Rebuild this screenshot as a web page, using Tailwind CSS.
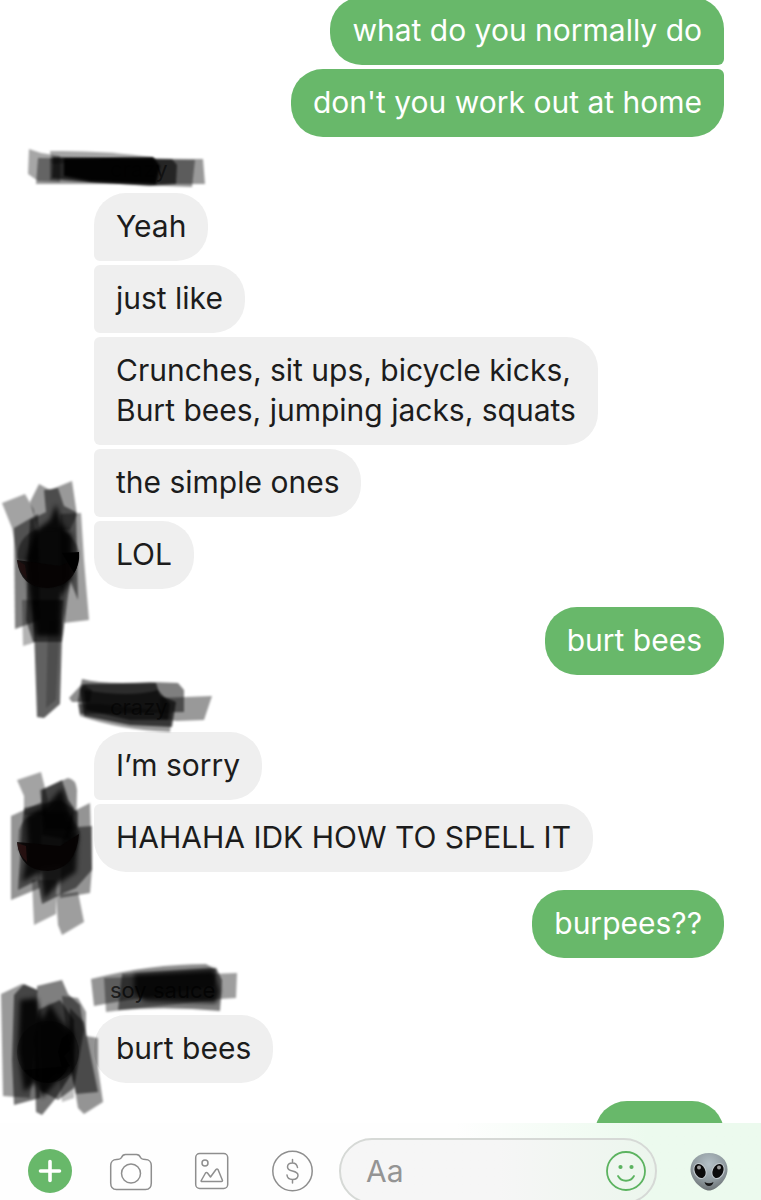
<!DOCTYPE html>
<html lang="en">
<head>
    <meta charset="UTF-8">
    <meta name="viewport" content="width=device-width, initial-scale=1.0">
    <title>Group Chat</title>
    <script src="https://cdn.jsdelivr.net/npm/@tailwindcss/browser@4"></script>
</head>
<body class="bg-white">

    <div class="h-screen flex flex-col overflow-hidden font-[Inter,'Liberation_Sans',sans-serif] text-[30px] leading-10 text-[#1c1c1c]">

        <!-- Messages -->
        <main class="flex-1 min-h-0 overflow-hidden">

            <section class="-mt-[3px] pr-[37px] flex flex-col items-end gap-1 text-white">
                <p class="bg-[#68b86a] px-[22px] pt-[13px] pb-[15px] rounded-[32px] rounded-br-md">what do you normally do</p>
                <p class="bg-[#68b86a] px-[22px] pt-[13px] pb-[15px] rounded-[32px] rounded-tr-md">don't you work out at home</p>
            </section>

            <section class="relative pl-[94px] flex flex-col items-start gap-1">
                <h2 class="h-[52px] pt-5 pl-4 text-[22px] leading-6 text-[#777]">crazy</h2>
                <p class="bg-[#efefef] px-[22px] pt-[13px] pb-[15px] rounded-[32px] rounded-bl-md">Yeah</p>
                <p class="bg-[#efefef] px-[22px] pt-[13px] pb-[15px] rounded-[32px] rounded-l-md">just like</p>
                <p class="bg-[#efefef] px-[22px] pt-[13px] pb-[15px] rounded-[32px] rounded-l-md">Crunches, sit ups, bicycle kicks,<br>Burt bees, jumping jacks, squats</p>
                <p class="bg-[#efefef] px-[22px] pt-[13px] pb-[15px] rounded-[32px] rounded-l-md">the simple ones</p>
                <p class="bg-[#efefef] px-[22px] pt-[13px] pb-[15px] rounded-[32px] rounded-tl-md">LOL</p>

                <!-- marker over name and avatar -->
                <svg class="absolute left-0 top-0 pointer-events-none" width="220" height="600" viewBox="0 137 220 600" aria-hidden="true">
                    <defs>
                        <filter id="soft" x="-10%" y="-10%" width="120%" height="120%"><feGaussianBlur stdDeviation="1.300"/></filter>
                        <filter id="softer" x="-20%" y="-20%" width="140%" height="140%"><feGaussianBlur stdDeviation="2.500"/></filter>
                    </defs>
                    <g filter="url(#soft)">
                        <path d="M29 149L41 153L60 156L60 182L38 181L28 174Z" opacity=".35"/>
                        <path d="M50 151Q100 150 152 157L52 164Z" opacity=".35"/>
                        <path d="M38 158L203 159L205 184L36 184Z" opacity=".4"/>
                        <path d="M50 158L195 160L192 187L140 185L80 182L50 180Z" opacity=".4"/>
                        <path d="M53 157L172 159L177 165L176 184L150 186L90 182L52 178Z" opacity=".6"/>
                    </g>
                    <path d="M64 159L153 157L160 166L156 184L90 181L64 176Z" opacity=".92" filter="url(#soft)"/>
                    <g filter="url(#soft)">
                        <path d="M2 503L25 494L34 510L38 560L18 560L12 528Z" opacity=".36"/>
                        <path d="M30 502L39 484L50 490L72 481L77 515L70 530L38 530Z" opacity=".4"/>
                        <path d="M14 528L38 514L40 620L15 629Z" opacity=".5"/>
                        <path d="M60 514L81 513L84 560L89 620L64 623L60 580Z" opacity=".38"/>
                        <path d="M22 600L36 600L36 642L23 646Z" opacity=".3"/>
                        <path d="M44 490L58 488L64 506L76 512L78 600L70 580L62 642L33 642L26 620L30 520L46 512Z" opacity=".5"/>
                        <path d="M33 600L63 600L60 704L44 718L37 717Z" opacity=".62"/>
                        <path d="M48 620L60 620L56 700L46 708Z" opacity=".2"/>
                    </g>
                    <path d="M34 532L50 520L56 504L62 524L72 536L72 578L62 596L60 636L36 636L30 600L26 560Z" opacity=".88" filter="url(#softer)"/>
                    <path d="M17 557Q18 538 35 530L60 529Q76 538 79 552Q80 568 66 582Q48 594 29 582Q18 572 17 557Z" fill="#060202" opacity=".45" filter="url(#soft)"/>
                    <path d="M17 560Q20 588 48 588Q76 586 79 557L60 566Z" fill="#060202" opacity=".8"/>
                    <path d="M62 553L79 552Q80 564 74 573Z" fill="#000"/>
                    <path d="M17 560Q19 572 27 579L25 565Z" fill="#281010" opacity=".6"/>
                </svg>
            </section>

            <section class="mt-[18px] pr-[37px] flex flex-col items-end text-white">
                <p class="bg-[#68b86a] px-[22px] pt-[13px] pb-[15px] rounded-[32px]">burt bees</p>
            </section>

            <section class="relative pl-[94px] flex flex-col items-start gap-1">
                <h2 class="h-[53px] pt-5 pl-4 text-[22px] leading-6 text-[#777]">crazy</h2>
                <p class="bg-[#efefef] px-[22px] pt-[13px] pb-[15px] rounded-[32px] rounded-bl-md">I’m sorry</p>
                <p class="bg-[#efefef] px-[22px] pt-[13px] pb-[15px] rounded-[32px] rounded-tl-md">HAHAHA IDK HOW TO SPELL IT</p>

                <svg class="absolute left-0 top-0 pointer-events-none" width="220" height="270" viewBox="0 675 220 270" aria-hidden="true">
                    <g filter="url(#soft)">
                        <path d="M69 698L82 684L92 690L90 702L72 702Z" opacity=".45"/>
                        <path d="M82 679Q105 685 150 682L178 683L184 690L184 712L80 714L78 700Z" opacity=".5"/>
                        <path d="M84 684L156 683L160 695L176 702L172 727L130 725L84 716L80 690Z" opacity=".65"/>
                        <path d="M84 690Q130 698 158 690L170 704L168 720L130 720L86 710Z" opacity=".6"/>
                        <path d="M160 698L212 696L204 720L176 721L160 718Z" opacity=".4"/>
                        <path d="M78 704L100 704L172 712L170 732Q120 730 80 716Z" opacity=".4"/>
                    </g>
                    <g filter="url(#soft)">
                        <path d="M17 780L41 772L48 800L46 815L24 815L24 796Z" opacity=".36"/>
                        <path d="M40 790L68 778Q76 779 77 790L76 830L44 830Z" opacity=".42"/>
                        <path d="M42 790L62 780L68 800L74 808L70 840L42 835Z" opacity=".55"/>
                        <path d="M11 816L42 802L40 888L11 900Z" opacity=".42"/>
                        <path d="M72 812L90 803L92 868L90 893L60 898L62 840Z" opacity=".42"/>
                        <path d="M24 808L60 800L78 812L78 827L92 826L92 870L76 888L64 893L42 904L38 880L18 890L22 830Z" opacity=".5"/>
                        <path d="M32 880L56 880L56 914L34 925Z" opacity=".35"/>
                        <path d="M56 895L78 892L84 922L62 935L58 925Z" opacity=".38"/>
                    </g>
                    <path d="M26 816L46 806L62 788L70 814L78 836L76 872L58 884L44 900L40 872L22 882L28 846Z" opacity=".82" filter="url(#softer)"/>
                    <path d="M19 830Q24 816 40 812L68 812L80 832Q80 850 68 864L36 868L18 850Z" fill="#060202" opacity=".4" filter="url(#soft)"/>
                    <path d="M17 842Q20 871 48 871Q76 869 79 834L60 846Z" fill="#060202" opacity=".85"/>
                    <path d="M17 843Q19 855 27 862L26 846Z" fill="#301414" opacity=".7"/>
                </svg>
            </section>

            <section class="mt-[18px] pr-[37px] flex flex-col items-end text-white">
                <p class="bg-[#68b86a] px-[22px] pt-[13px] pb-[15px] rounded-[32px]">burpees??</p>
            </section>

            <section class="relative pl-[94px] flex flex-col items-start gap-1">
                <h2 class="h-[53px] pt-5 pl-4 text-[22px] leading-6 text-[#555]">soy sauce</h2>
                <p class="bg-[#efefef] px-[22px] pt-[13px] pb-[15px] rounded-[32px]">burt bees</p>

                <svg class="absolute left-0 top-0 pointer-events-none" width="250" height="170" viewBox="0 958 250 170" aria-hidden="true">
                    <g filter="url(#soft)">
                        <path d="M91 979Q150 964 206 964L216 970L214 986L110 1003L94 1006Z" opacity=".42"/>
                        <path d="M104 978L210 974L237 973L236 998L220 999L140 1008L106 1012Z" opacity=".38"/>
                        <path d="M122 974L216 968L222 980L220 1011Q170 1006 118 1010Z" opacity=".5"/>
                    </g>
                    <path d="M134 974L214 969L220 992L216 1003L145 1001L134 992Z" opacity=".82" filter="url(#softer)"/>
                    <g filter="url(#soft)">
                        <path d="M1 994L22 984L38 990L30 1098L3 1096Z" opacity=".4"/>
                        <path d="M14 995L24 984L37 990L40 1098L14 1105L12 1060Z" opacity=".55"/>
                        <path d="M37 986L62 980L68 994L80 1005L84 1030L74 1088L58 1100L40 1090Z" opacity=".5"/>
                        <path d="M38 1010L60 1000L74 1020L74 1070L56 1098L42 1115L36 1112L34 1040Z" opacity=".55"/>
                        <path d="M62 996L78 998L86 1012L86 1036L98 1038L98 1068L103 1102L84 1114L78 1108L70 1060Z" opacity=".42"/>
                        <path d="M70 1008L84 1022L98 1092L76 1094L68 1060Z" opacity=".5"/>
                        <path d="M58 1070L74 1070L74 1098L62 1102Z" opacity=".25"/>
                    </g>
                    <path d="M20 1000L37 998L42 1020L50 1004L60 1020L74 1034L72 1070L56 1082L42 1098L36 1082L24 1092L18 1050Z" opacity=".88" filter="url(#softer)"/>
                    <circle cx="48" cy="1052" r="31" opacity=".35"/>
                    <path d="M24 1070L68 1066Q62 1081 48 1083Q32 1082 24 1070Z" opacity=".7"/>
                    <path d="M62 1038L68 1034L70 1050L64 1056L70 1066L62 1068L58 1052Z" opacity=".8"/>
                </svg>
            </section>

            <section class="mt-[18px] pr-[37px] flex flex-col items-end">
                <p class="bg-[#68b86a] w-[129px] h-[68px] rounded-[32px]"></p>
            </section>
        </main>

        <!-- Composer -->
        <footer class="h-[77px] shrink-0 pt-[15px] pl-7 pr-[30px] flex items-start overflow-hidden bg-linear-to-r from-[#fefefe] from-60% to-[#ecfaee] to-85%">
            <div class="h-[66px] flex items-center gap-[37px]">
                <button type="button" aria-label="More" class="size-11">
                    <svg class="size-11" viewBox="0 0 44 44"><circle cx="22" cy="22" r="22" fill="#68b86a"/><path d="M22 12.500V31.500M12.500 22H31.500" stroke="#fff" stroke-width="3.600" stroke-linecap="round"/></svg>
                </button>
                <button type="button" aria-label="Camera" class="size-11">
                    <svg class="size-11" viewBox="0 0 44 44" fill="none" stroke="#8e8e8e" stroke-width="1.500"><path d="M7.500 10.500C10 10.500 11.500 10.500 12.500 8.500C13.500 6 14.500 5.500 16.500 5.500H27.500C29.500 5.500 30.500 6 31.500 8.500C32.500 10.500 34 10.500 36.500 10.500C40 10.500 42.300 13 42.300 16.500V34C42.300 38 40 40.500 36.500 40.500H7.500C4 40.500 1.700 38 1.700 34V16.500C1.700 13 4 10.500 7.500 10.500Z"/><circle cx="22" cy="24.500" r="9.500"/></svg>
                </button>
                <button type="button" aria-label="Photos" class="size-11">
                    <svg class="size-11" viewBox="0 0 44 44" fill="none" stroke="#8e8e8e" stroke-width="1.500" stroke-linejoin="round"><rect x="5.700" y="4.500" width="32" height="35" rx="4"/><circle cx="15" cy="14" r="3"/><path d="M11 32L15.500 24Q16.500 23 17.500 24L20.500 28L26 20.500Q27 19.500 28 20.500L32.500 31.500Q32.500 32.500 31.500 32.500H11.500Z"/></svg>
                </button>
                <button type="button" aria-label="Payments" class="size-11">
                    <svg class="size-11" viewBox="0 0 44 44" fill="none" stroke="#8e8e8e" stroke-width="1.500" stroke-linecap="round"><circle cx="21.500" cy="22" r="19.700"/><path d="M21.500 10.500V14M21.500 30.500V34M26.500 18.500C26 15.500 24.500 14 21.500 14C18.500 14 16.500 15.600 16.500 18C16.500 20.500 18.500 21.300 21.500 22C24.500 22.700 27 23.500 27 26.300C27 29 24.800 30.500 21.500 30.500C18.300 30.500 16.300 29 16 26"/></svg>
                </button>
            </div>
            <div class="ml-6 flex-1 min-w-0 h-[66px] flex items-center pl-[25px] pr-[9px] border-2 border-[#d6d9d6] rounded-full bg-linear-to-r from-[#f6f6f6] from-50% to-[#ecf6ed]">
                <input type="text" aria-label="Message" placeholder="Aa" class="flex-1 min-w-0 h-10 text-[30px] outline-none placeholder:text-[#949494]">
                <button type="button" aria-label="Stickers" class="size-10">
                    <svg class="size-10" viewBox="0 0 40 40" fill="none" stroke="#5cb360" stroke-width="1.800" stroke-linecap="round"><circle cx="20" cy="20" r="19"/><path d="M12 25C15.500 31.300 24.500 31.300 28 25"/><circle cx="14.500" cy="16" r="1.200" fill="#5cb360"/><circle cx="25.500" cy="16" r="1.200" fill="#5cb360"/></svg>
                </button>
            </div>
            <button type="button" aria-label="Send alien" class="ml-[30px] w-11 h-[66px] flex items-center justify-center">
                <svg class="size-11" viewBox="0 0 44 44">
                    <defs>
                        <radialGradient id="skin" cx=".5" cy=".3" r=".7"><stop offset="0" stop-color="#b4c0c6"/><stop offset=".6" stop-color="#929da2"/><stop offset="1" stop-color="#6c7275"/></radialGradient>
                    </defs>
                    <path d="M22 4C33 4 40.500 11 40.500 20.500C40.500 31 29 41.500 22 41.500C15 41.500 3.500 31 3.500 20.500C3.500 11 11 4 22 4Z" fill="url(#skin)"/>
                    <ellipse cx="13" cy="22" rx="6.300" ry="8.300" transform="rotate(-24 13 22)" fill="#c0c8cc"/>
                    <ellipse cx="31" cy="22" rx="6.300" ry="8.300" transform="rotate(24 31 22)" fill="#c0c8cc"/>
                    <ellipse cx="13" cy="22" rx="5.200" ry="7.400" transform="rotate(-24 13 22)" fill="#0b0b0b"/>
                    <ellipse cx="31" cy="22" rx="5.200" ry="7.400" transform="rotate(24 31 22)" fill="#0b0b0b"/>
                    <ellipse cx="12" cy="18.500" rx="2" ry="2" fill="#999"/>
                    <ellipse cx="32" cy="18.500" rx="2" ry="2" fill="#999"/>
                    <path d="M17.500 33Q22 35.500 26.500 33Q25.500 37 22 37Q18.500 37 17.500 33Z" fill="#161616"/>
                </svg>
            </button>
        </footer>
    </div>

</body>
</html>
